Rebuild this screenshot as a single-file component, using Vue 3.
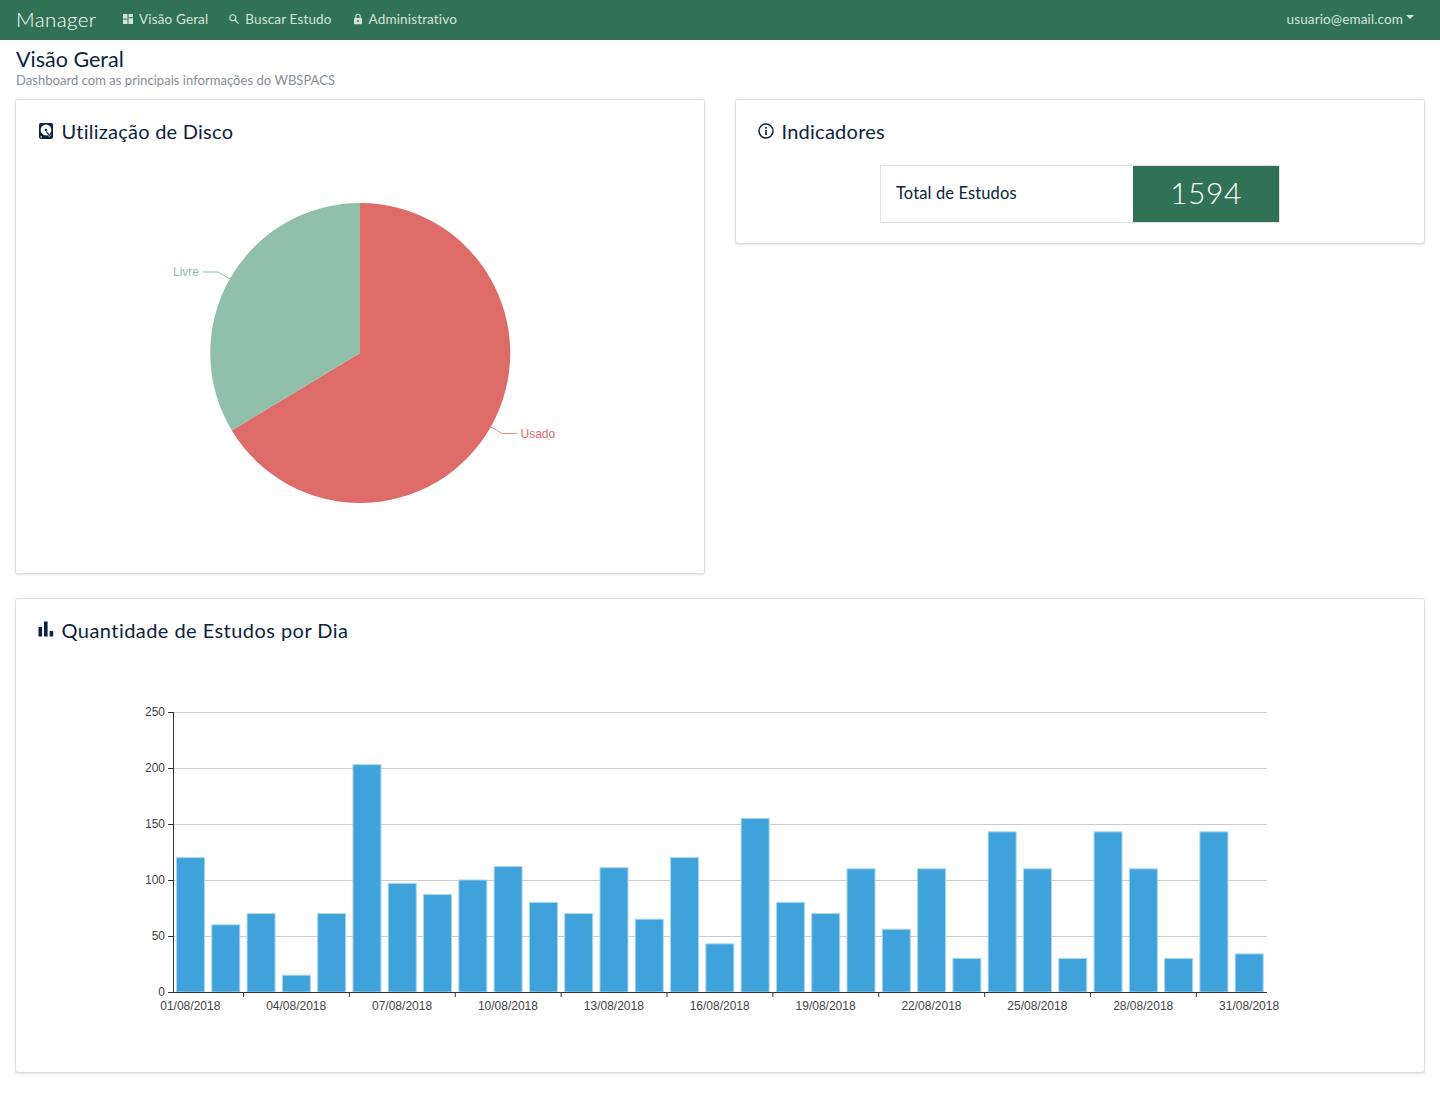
<script setup>
const values = [120,60,70,15,70,203,97,87,100,112,80,70,111,65,120,43,155,80,70,110,56,110,30,143,110,30,143,110,30,143,34]
const step = 35.29
const bars = values.map((v, i) => ({
  x: 176.5 + i * step,
  y: 992 - v * 1.12,
  h: v * 1.12,
}))
const grid = [0, 50, 100, 150, 200, 250].map(v => ({ v, y: 992 - v * 1.12 + 0.5 }))
const dates = ['01','04','07','10','13','16','19','22','25','28','31'].map((d, i) => ({
  text: d + '/08/2018',
  x: 190.3 + i * 105.88,
  tick: 243.5 + i * 105.88,
}))
const nav = [
  { label: 'Visão Geral', icon: 'grid' },
  { label: 'Buscar Estudo', icon: 'search' },
  { label: 'Administrativo', icon: 'lock' },
]
</script>

<template>
  <div class="app">
    <header class="navbar">
      <span class="brand">Manager</span>
      <nav class="links">
        <a v-for="n in nav" :key="n.label" class="link">
          <svg class="nav-icon" viewBox="0 0 12 12">
            <g v-if="n.icon === 'grid'" fill="currentColor">
              <rect x="1" y="1" width="4.5" height="4.6" />
              <rect x="6.5" y="1" width="4.5" height="3.2" />
              <rect x="1" y="6.6" width="4.5" height="4.4" />
              <rect x="6.5" y="5.2" width="4.5" height="5.8" />
            </g>
            <g v-else-if="n.icon === 'search'" fill="none" stroke="currentColor" stroke-width="1.1">
              <circle cx="4.8" cy="4.8" r="3" />
              <path d="M7 7l3.6 3.6" />
            </g>
            <g v-else>
              <rect x="2" y="5" width="8" height="6.2" rx="0.8" fill="currentColor" />
              <path d="M3.8 5.2V3.4a2.2 2.2 0 0 1 4.4 0v1.8" fill="none" stroke="currentColor" stroke-width="1.1" />
              <circle cx="6" cy="8" r="1" fill="#317256" />
            </g>
          </svg>
          <span>{{ n.label }}</span>
        </a>
      </nav>
      <span class="user">usuario@email.com<i class="caret"></i></span>
    </header>

    <main class="page">
      <h1 class="title">Visão Geral</h1>
      <p class="subtitle">Dashboard com as principais informações do WBSPACS</p>

      <div class="row">
        <section class="card disk">
          <h2 class="card-title">
            <svg class="title-icon" viewBox="0 0 16 16">
              <rect x="1" y="0" width="14" height="16" rx="2" fill="#0c2340" />
              <circle cx="8" cy="7" r="5.4" fill="#fff" />
              <circle cx="8" cy="7" r="1.3" fill="#0c2340" />
              <path d="M7.5 8.7l3.6 5 1.5-1.2L8.7 7.8z" fill="#0c2340" stroke="#fff" stroke-width="0.7" />
              <circle cx="3.2" cy="14" r="0.8" fill="#fff" />
            </svg>
            Utilização de Disco
          </h2>
          <svg class="pie" viewBox="16 160 688 400">
            <path d="M360 353V203A150 150 0 1 1 231.8 430.5Z" fill="#dd6b68" />
            <path d="M360 353L231.8 430.5A150 150 0 0 1 360 203Z" fill="#90c0a9" />
            <path d="M491 427l11 6.5h15" fill="none" stroke="#dd6b68" stroke-opacity=".75" />
            <path d="M230 279l-12-7h-15" fill="none" stroke="#90c0a9" />
            <text x="520.5" y="438" class="pie-label" fill="#dd6b68">Usado</text>
            <text x="173" y="276" class="pie-label" fill="#90c0a9">Livre</text>
          </svg>
        </section>

        <section class="card indicators">
          <h2 class="card-title">
            <svg class="title-icon" viewBox="0 0 16 16">
              <circle cx="8" cy="8" r="7" fill="none" stroke="#0c2340" stroke-width="1.5" />
              <rect x="7.2" y="7" width="1.6" height="5" fill="#0c2340" />
              <rect x="7.2" y="4" width="1.6" height="1.7" fill="#0c2340" />
            </svg>
            Indicadores
          </h2>
          <div class="stat">
            <span class="stat-label">Total de Estudos</span>
            <span class="stat-value">1594</span>
          </div>
        </section>
      </div>

      <section class="card chart-card">
        <h2 class="card-title">
          <svg class="title-icon" viewBox="0 0 16 16">
            <rect x="0.5" y="6" width="3.6" height="9.5" fill="#0c2340" />
            <rect x="6" y="0.5" width="3.6" height="15" fill="#0c2340" />
            <rect x="11.6" y="10" width="3.6" height="5.5" fill="#0c2340" />
          </svg>
          Quantidade de Estudos por Dia
        </h2>
        <svg class="bars" viewBox="16 660 1408 400">
          <g v-for="g in grid" :key="g.v">
            <line x1="173" :x2="1267" :y1="g.y" :y2="g.y" stroke="#cccccc" v-if="g.v" />
            <line x1="168" x2="173" :y1="g.y" :y2="g.y" stroke="#333" />
            <text x="165" :y="g.y + 3.5" class="axis" text-anchor="end">{{ g.v }}</text>
          </g>
          <rect
            v-for="(b, i) in bars"
            :key="i"
            :x="b.x"
            :y="b.y"
            width="28"
            :height="b.h"
            fill="#3fa2db"
            stroke="#a9d6f0"
            stroke-width="1"
          />
          <line x1="173.5" x2="173.5" y1="712" y2="992.5" stroke="#333" />
          <line x1="173" x2="1267" y1="992.5" y2="992.5" stroke="#333" />
          <g v-for="d in dates" :key="d.text">
            <line v-if="d.tick < 1200" :x1="d.tick" :x2="d.tick" y1="992" y2="997" stroke="#333" />
            <text :x="d.x" y="1010" class="axis" text-anchor="middle">{{ d.text }}</text>
          </g>
        </svg>
      </section>
    </main>
  </div>
</template>

<style>
body { background: #fff; }
</style>

<style scoped>
.app {
  font-family: Lato, "Open Sans", sans-serif;
  color: #0c2340;
  min-height: 1113px;
}
.navbar {
  height: 40px;
  box-sizing: border-box;
  background: #317256;
  display: flex;
  align-items: center;
  padding: 0 16px 2px;
  color: #d3e3db;
}
.brand {
  font-size: 20.5px;
  font-weight: 300;
  letter-spacing: 0.4px;
  color: #fff;
  width: 106px;
}
.links {
  display: flex;
  gap: 20px;
  flex: 1;
}
.link {
  display: flex;
  align-items: center;
  gap: 5px;
  font-size: 13.5px;
  letter-spacing: 0.15px;
}
.nav-icon {
  width: 12px;
  height: 12px;
}
.user {
  font-size: 13.5px;
  letter-spacing: 0.12px;
  margin-right: 10px;
  display: flex;
  align-items: center;
}
.caret {
  display: inline-block;
  margin-left: 3px;
  margin-bottom: 4px;
  border-top: 4px solid #d3e3db;
  border-left: 4px solid transparent;
  border-right: 4px solid transparent;
}
.page {
  padding: 0 15px;
}
.title {
  margin: 6px 0 0 1px;
  font-size: 21.5px;
  font-weight: 400;
  line-height: 27px;
}
.subtitle {
  margin: -1px 0 0 1px;
  font-size: 13px;
  letter-spacing: 0.04px;
  line-height: 16px;
  color: #868e97;
  height: 19px;
}
.row {
  display: grid;
  grid-template-columns: 690px 690px;
  gap: 30px;
  align-items: start;
  margin-top: 8px;
}
.card {
  background: #fff;
  border: 1px solid #dcdfe4;
  border-radius: 3px;
  box-shadow: 0 1px 2px rgba(30, 40, 70, 0.13);
  box-sizing: border-box;
  overflow: hidden;
}
.disk {
  height: 475px;
}
.indicators {
  height: 145px;
}
.chart-card {
  height: 475px;
  margin-top: 24px;
}
.card-title {
  margin: 0;
  padding: 17px 0 0 22px;
  box-sizing: border-box;
  font-size: 20px;
  font-weight: 400;
  letter-spacing: 0.25px;
  line-height: 26px;
  display: flex;
  align-items: center;
  gap: 7.5px;
  height: 45px;
}
.chart-card .card-title {
  letter-spacing: 0.45px;
}
.title-icon {
  width: 16px;
  height: 16px;
  flex: none;
}
.chart-card .title-icon {
  margin-bottom: 2px;
}
.pie {
  display: block;
  width: 688px;
  height: 400px;
  margin-top: 15px;
}
.pie-label {
  font-family: "Liberation Sans", sans-serif;
  font-size: 12px;
}
.stat {
  margin: 20px auto 0;
  width: 400px;
  height: 58px;
  display: flex;
  border: 1px solid #dfe2e8;
  box-sizing: border-box;
}
.stat-label {
  flex: 1;
  display: flex;
  align-items: center;
  padding: 0 0 2px 15px;
  font-size: 16.5px;
  letter-spacing: 0.12px;
}
.stat-value {
  width: 146px;
  background: #317256;
  color: #fff;
  display: flex;
  align-items: center;
  justify-content: center;
  padding-bottom: 5px;
  box-sizing: border-box;
  font-size: 30px;
  font-weight: 300;
  letter-spacing: 0.5px;
}
.bars {
  display: block;
  width: 1408px;
  height: 400px;
  margin-top: 16px;
}
.axis {
  font-family: "Liberation Sans", sans-serif;
  font-size: 12px;
  fill: #444;
}
</style>
